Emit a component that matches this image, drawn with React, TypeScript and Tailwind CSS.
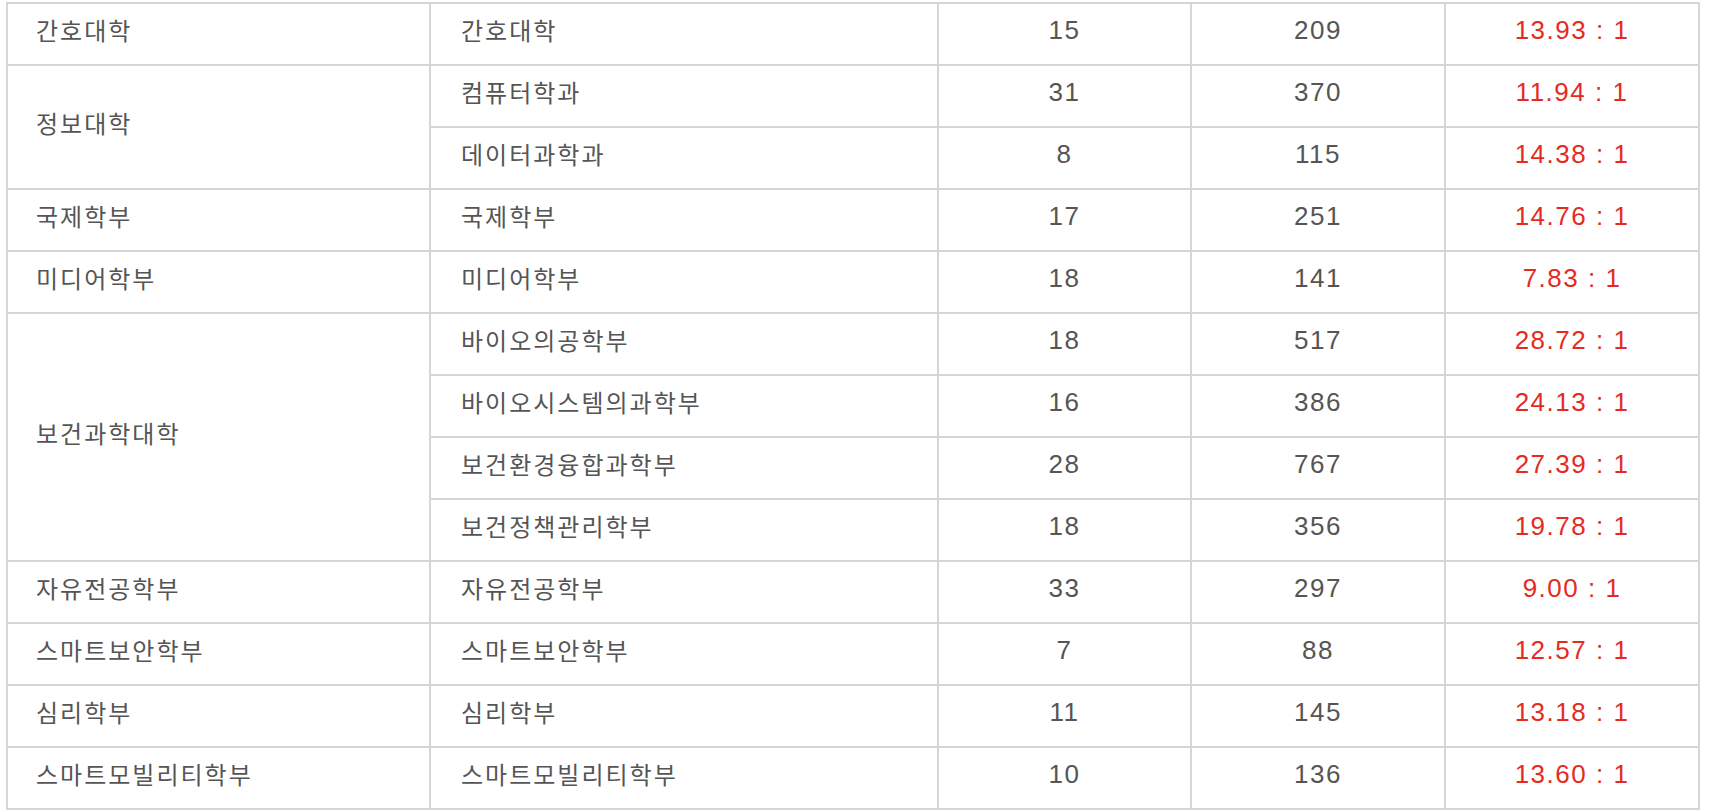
type Row = { college?: string; span?: number; dept: string; quota: number; applicants: number; ratio: string }

const rows: Row[] = [
  { college: '간호대학', dept: '간호대학', quota: 15, applicants: 209, ratio: '13.93 : 1' },
  { college: '정보대학', span: 2, dept: '컴퓨터학과', quota: 31, applicants: 370, ratio: '11.94 : 1' },
  { dept: '데이터과학과', quota: 8, applicants: 115, ratio: '14.38 : 1' },
  { college: '국제학부', dept: '국제학부', quota: 17, applicants: 251, ratio: '14.76 : 1' },
  { college: '미디어학부', dept: '미디어학부', quota: 18, applicants: 141, ratio: '7.83 : 1' },
  { college: '보건과학대학', span: 4, dept: '바이오의공학부', quota: 18, applicants: 517, ratio: '28.72 : 1' },
  { dept: '바이오시스템의과학부', quota: 16, applicants: 386, ratio: '24.13 : 1' },
  { dept: '보건환경융합과학부', quota: 28, applicants: 767, ratio: '27.39 : 1' },
  { dept: '보건정책관리학부', quota: 18, applicants: 356, ratio: '19.78 : 1' },
  { college: '자유전공학부', dept: '자유전공학부', quota: 33, applicants: 297, ratio: '9.00 : 1' },
  { college: '스마트보안학부', dept: '스마트보안학부', quota: 7, applicants: 88, ratio: '12.57 : 1' },
  { college: '심리학부', dept: '심리학부', quota: 11, applicants: 145, ratio: '13.18 : 1' },
  { college: '스마트모빌리티학부', dept: '스마트모빌리티학부', quota: 10, applicants: 136, ratio: '13.60 : 1' },
]

const cell = 'border-r-2 border-b-2 border-[#d6d6d6] pt-0 pb-[8px] align-middle'
const num = "text-center font-['Liberation_Sans',Arial,sans-serif] text-[26px] tracking-[1.5px]"

export default function App() {
  return (
    <div className="min-h-[810px] bg-white pl-[6px] pt-[2px] font-['Noto_Sans_CJK_KR',sans-serif] text-[24px] tracking-[2px] text-[#555]">
      <table className="w-[1694px] table-fixed border-separate border-spacing-0 border-l-2 border-t-2 border-[#d6d6d6]">
        <colgroup>
          <col className="w-[423px]" />
          <col className="w-[508px]" />
          <col className="w-[253px]" />
          <col className="w-[254px]" />
          <col className="w-[254px]" />
        </colgroup>
        <tbody>
          {rows.map((r, i) => (
            <tr key={i} className="h-[62px]">
              {r.college && (
                <td rowSpan={r.span ?? 1} className={`${cell} pl-[28px] text-left`}>
                  {r.college}
                </td>
              )}
              <td className={`${cell} pl-[30px] text-left`}>{r.dept}</td>
              <td className={`${cell} ${num}`}>{r.quota}</td>
              <td className={`${cell} ${num}`}>{r.applicants}</td>
              <td className={`${cell} ${num} text-[#e52b1f]`}>{r.ratio}</td>
            </tr>
          ))}
        </tbody>
      </table>
    </div>
  )
}
